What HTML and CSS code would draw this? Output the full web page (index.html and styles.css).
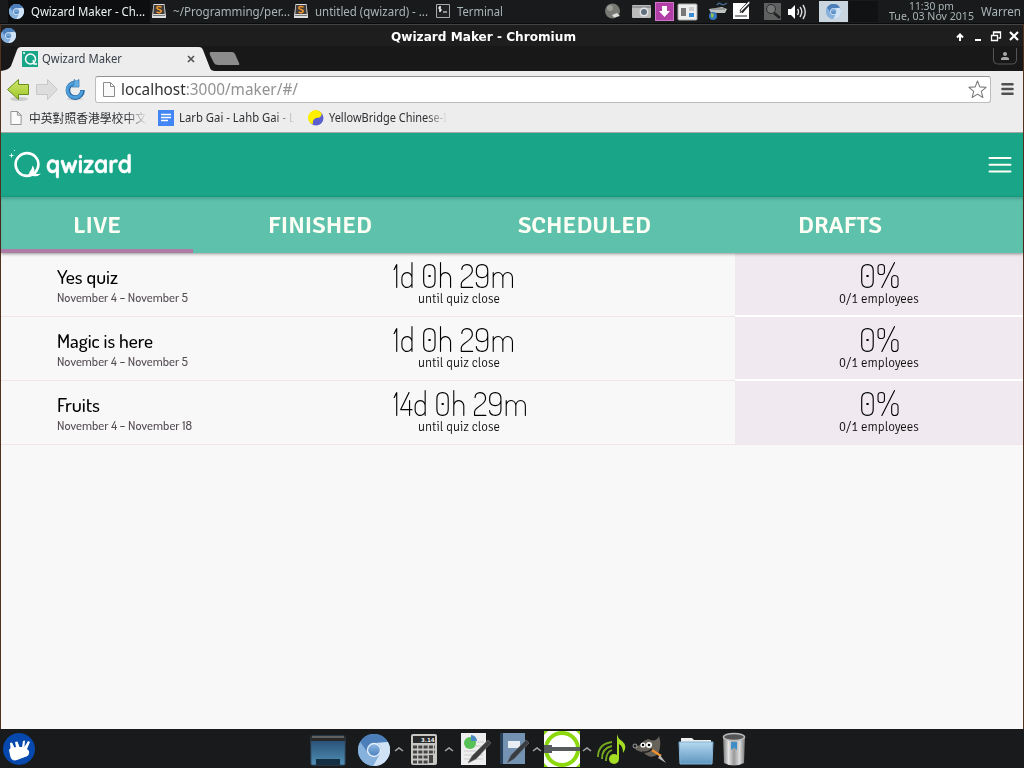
FILE: index.html
```html
<!DOCTYPE html>
<html lang="en">
<head>
<meta charset="utf-8">
<title>Qwizard Maker</title>
<link rel="stylesheet" href="styles.css">
</head>
<body>
<svg class="defs" width="0" height="0">
  <defs>
    <linearGradient id="blue" x2="0" y2="1"><stop stop-color="#8db8e2"/><stop offset="1" stop-color="#4d83c0"/></linearGradient>
    <linearGradient id="screen" x2="0" y2="1"><stop stop-color="#23466c"/><stop offset="1" stop-color="#4f8fb5"/></linearGradient>
    <linearGradient id="folder" x2="0" y2="1"><stop stop-color="#b5d8ee"/><stop offset="1" stop-color="#5d96c0"/></linearGradient>
    <linearGradient id="metal"><stop stop-color="#777"/><stop offset=".25" stop-color="#e4e4e4"/><stop offset=".5" stop-color="#999"/><stop offset=".75" stop-color="#ddd"/><stop offset="1" stop-color="#777"/></linearGradient>
    <linearGradient id="leaf" x2="0" y2="1"><stop stop-color="#d0e66a"/><stop offset="1" stop-color="#9fc62c"/></linearGradient>
    <symbol id="chromium" viewBox="0 0 32 32">
      <circle cx="16" cy="16" r="16" fill="#76a4d4"/>
      <path d="M2.1 8A16 16 0 0 1 29.9 8L16 9A7 7 0 0 0 9.3 18Z" fill="#4c7fb9"/>
      <path d="M29.9 8A16 16 0 0 1 15 32l7-12.500A7 7 0 0 0 18 9Z" fill="#cfe2f6"/>
      <path d="M2.100 8A16 16 0 0 0 15 32l5-10A7 7 0 0 1 9.300 18Z" fill="#86b1dd"/>
      <circle cx="16" cy="16" r="7.200" fill="#e4effa"/><circle cx="16" cy="16" r="5.800" fill="url(#blue)"/>
    </symbol>
    <symbol id="sublime" viewBox="0 0 14 14">
      <path d="M1.500 0h11L14 12v2H0v-2Z" fill="#ddd"/><path d="M2 1h10l.7 9H1.300Z" fill="#403d3b"/><path d="M1 11.500h12" stroke="#777"/>
      <path d="M9.500 3Q5 1.600 4.800 4q0 1 2.300 1.500T9.300 7.200Q9 9.500 4.500 8.100" fill="none" stroke="#f79a2e" stroke-width="1.500"/>
    </symbol>
    <symbol id="page" viewBox="0 0 12 15"><path d="M.5.500h7l4 4v10H.5ZM7.500.500v4h4" fill="#fafafa" stroke="#8b8b8b"/></symbol>
  </defs>
</svg>

<header class="panel">
  <div class="task task-active"><svg class="i15"><use href="#chromium"/></svg><span data-w="114">Qwizard Maker - Ch...</span></div>
  <div class="task task-code"><svg class="i14"><use href="#sublime"/></svg><span data-w="117">~/Programming/per...</span></div>
  <div class="task task-doc"><svg class="i14"><use href="#sublime"/></svg><span data-w="113">untitled (qwizard) - ...</span></div>
  <div class="task task-term"><svg class="i14" viewBox="0 0 14 14"><path d="M.5.500h13v13H.5Z" fill="#202223" stroke="#aaa"/><path d="M5 3H3v2h2v2H3M4 2v6M7 8h4" fill="none" stroke="#fff"/></svg><span data-w="46">Terminal</span></div>
  <svg class="tray" viewBox="600 0 280 24">
    <circle cx="612.500" cy="11" r="7.500" fill="#777972"/><circle cx="610" cy="8" r="3" fill="#9b9d95"/><path d="M612 15l5-2 3 3-6 1.500Z" fill="#ddd"/>
    <rect x="632" y="5" width="19" height="13" rx="1" fill="#bbb"/><path d="M632 7h19" stroke="#888" stroke-width="1.500"/><circle cx="644" cy="12" r="4.500" fill="#e6e6e6"/><circle cx="644" cy="12" r="3" fill="#607080"/>
    <rect x="655.500" y="2.500" width="18" height="18" fill="#b23fa7" stroke="#cf77ca"/><path d="M662 6h5v5h3l-5.500 6-5.500-6h3Z" fill="#fff"/>
    <rect x="678" y="4" width="19" height="16" rx="1" fill="#eee" stroke="#aaa"/><rect x="681" y="8" width="5" height="8" fill="#777"/><path d="M689 7h5v4h-5Z" fill="#ccc"/><path d="M689 13h5v4h-5Z" fill="#3b8bd0"/>
    <path d="M709 9l13-2 5 2-2 4h-14Z" fill="#bfc4c1"/><path d="M711 9h14" stroke="#6c716e"/><path d="M717 5q2-3 4-1t6-1" fill="none" stroke="#46678c" stroke-width="1.500"/><circle cx="713" cy="16" r="4" fill="#3376bb"/><path d="M711 13l3 1-1 4-2-1Z" fill="#94bd55"/>
    <path d="M733 3h16v16h-16Z" fill="#fff"/><path d="M735 16h12" stroke="#222"/><path d="M741 12l8-9" stroke="#222" stroke-width="4"/><path d="M740 13l1-4 8-8 1 2-8 8Z" fill="#eee" stroke="#222" stroke-width=".6"/>
    <path d="M764 3h17v17h-17Z" fill="#5f6060"/><circle cx="771" cy="9" r="4.500" fill="#747676" stroke="#292a2b"/><path d="M774 13l6 5" stroke="#202020" stroke-width="2.500"/>
    <path d="M788 9h3l4-4v14l-4-4h-3Z" fill="#fff"/><path d="M797.500 9q2 2.500 0 6M800 7q3.500 4.500 0 10M803 5q4.500 7 0 14" fill="none" stroke="#ddd" stroke-width="1.400"/>
    <path d="M819 1h29v21h-29Z" fill="#c9d5df"/><path d="M849 1h29v21h-29Z" fill="#111213"/><use href="#chromium" x="826" y="4" width="15" height="15"/>
  </svg>
  <div class="clock"><span data-w="45">11:30 pm</span><span data-w="85">Tue, 03 Nov 2015</span></div>
  <span class="user" data-w="40">Warren</span>
</header>

<main class="window">
  <div class="titlebar">
    <svg class="i15"><use href="#chromium"/></svg>
    <h1><span data-w="185">Qwizard Maker - Chromium</span></h1>
    <svg class="controls" viewBox="951 25 70 22"><path d="M960 41v-6M957 37.500l3-3 3 3" fill="none" stroke="#fff" stroke-width="2"/><path d="M975 40h6" stroke="#fff" stroke-width="2"/><path d="M993.500 35v-3h7v6h-2M991.500 35.500h6v5h-6ZM991 35.500h7M993 32.500h8" fill="none" stroke="#fff" stroke-width="1.300"/><path d="M1010 32l8 8M1018 32l-8 8" stroke="#fff" stroke-width="2.200"/></svg>
  </div>
  <div class="tabstrip">
    <div class="browser-tab">
      <svg class="tab-shape" viewBox="0 0 240 25"><path d="M0 25q8-1 10-5L16 4q1-3 4-3h178q3 0 4 3l7 18q1 3 5 3Z" fill="#ededed"/><path d="M210 6h21q2 0 3 2l4 9q1 2-1 2h-20q-3 0-4-2l-4-8q-1-3 1-3Z" fill="#8c8c8c"/></svg>
      <div class="tab-label">
        <svg class="i16" viewBox="0 0 16 16"><path d="M0 0h16v16H0Z" fill="#19a587"/><circle cx="8.500" cy="8" r="5" fill="none" stroke="#fff" stroke-width="1.500"/><path d="M11 9l1 4h3M1 2h2" fill="none" stroke="#fff" stroke-width="1.300"/></svg>
        <span data-w="80">Qwizard Maker</span>
        <svg class="tab-close" viewBox="0 0 8 8"><path d="M1 1l6 6M7 1L1 7" stroke="#555" stroke-width="1.700"/></svg>
      </div>
    </div>
    <svg class="profile" viewBox="0 0 26 19"><path d="M1.500 1v12q0 4 4 4h15q4 0 4-4V1" fill="none" stroke="#555"/><circle cx="13" cy="7" r="2" fill="#aaa"/><path d="M9 13v-1q0-2 3-2h2q3 0 3 2v1Z" fill="#aaa"/></svg>
  </div>
  <div class="toolbar">
    <svg class="nav" viewBox="0 71 95 36">
      <ellipse cx="19" cy="99" rx="9" ry="2" fill="#ccc"/><path d="M7.500 89.500l11-10v5h10v10h-10v5Z" fill="url(#leaf)" stroke="#66901b"/>
      <path d="M57.500 89.500l-10-10v5h-11v10h11v5Z" fill="#ddd" stroke="#c8c8c8"/>
      <ellipse cx="75" cy="99" rx="8" ry="1.500" fill="#d4d4d4"/>
      <path d="M82.500 90A7.300 7.300 0 1 1 75 83" fill="none" stroke="#24649f" stroke-width="4.600"/><path d="M82 90.500A7.300 7.300 0 1 1 75 83" fill="none" stroke="#4c9edb" stroke-width="3"/><path d="M74 79.500l2.500 1.500 2.500-1.500v7.500h-7.500l2.500-2.500Z" fill="#64b0e5" stroke="#3375ae" stroke-width=".7"/>
    </svg>
    <div class="address">
      <svg class="url-page"><use href="#page"/></svg>
      <div class="url"><span data-w="177"><b>localhost</b>:3000/maker/#/</span></div>
      <svg class="star" viewBox="0 0 18 18"><path d="M9 1l2.200 5.500 5.900.4-4.500 3.900 1.500 5.800L9 13.400l-5.100 3.200 1.500-5.800L.9 6.900l5.900-.4Z" fill="#fff" stroke="#777" stroke-linejoin="round"/></svg>
    </div>
    <svg class="menu" viewBox="0 0 14 14"><path d="M2 2.200h10M2 7h10M2 11.800h10" stroke="#505050" stroke-width="2.600" stroke-linecap="round"/></svg>
  </div>
  <div class="bookmarks">
    <div class="bookmark bm-one"><svg><use href="#page"/></svg><span class="fade" data-w="118">中英對照香港學校中文</span></div>
    <div class="bookmark bm-two"><svg viewBox="0 0 16 16"><path d="M0 0h16v16H0Z" fill="#4285f4"/><path d="M3 4.500h10M3 7.500h10M3 10.500h7" stroke="#fff" stroke-width="1.300"/></svg><span class="fade" data-w="116">Larb Gai - Lahb Gai - L</span></div>
    <div class="bookmark bm-three"><svg viewBox="0 0 16 16"><circle cx="8" cy="8" r="7.500" fill="#5c60ce"/><path d="M1.500 12A7.500 7.500 0 0 1 11 1q4 2 2 5c-2 3-5 .5-7.500 4Q4.500 12 5 14Q2.500 14 1.500 12Z" fill="#ffef00"/></svg><span class="fade" data-w="118">YellowBridge Chinese-I</span></div>
  </div>

  <div class="app">
    <div class="app-header">
      <div class="brand">
        <svg viewBox="8 149 36 34"><circle cx="27" cy="165.500" r="11.400" fill="none" stroke="#fff" stroke-width="2.600"/><path d="M29.500 173q2.500-2 3-6.500 3 4 1.500 7.500 3 1.500 7 .5-3 3.500-8 2.500t-7.500.500q4-2 4-4.500Z" fill="#fff"/><path d="M11.500 154.500v4M9.500 156.500h4M14 151.500h1" stroke="#e5fff5"/></svg>
        <span data-w="86">qwizard</span>
      </div>
      <svg class="burger" viewBox="0 0 24 20"><path d="M1.500 3h21M1.500 9.800h21M1.500 16.600h21" stroke="#fdfff5" stroke-width="2" stroke-linecap="round"/></svg>
    </div>
    <nav class="tabs">
      <a class="tab tab-live"><span data-w="48">LIVE</span></a>
      <a class="tab tab-finished"><span data-w="104">FINISHED</span></a>
      <a class="tab tab-scheduled"><span data-w="133">SCHEDULED</span></a>
      <a class="tab tab-drafts"><span data-w="84">DRAFTS</span></a>
    </nav>
    <section class="quiz">
      <div class="about"><h2><span data-w="61">Yes quiz</span></h2><p><span data-w="131">November 4 – November 5</span></p></div>
      <div class="time"><strong><span data-w="122">1d <i>0</i>h 29m</span></strong><small><span data-w="82">until quiz close</span></small></div>
      <div class="progress"><strong><span data-w="41"><i>0</i>%</span></strong><small><span data-w="80">0/1 employees</span></small></div>
    </section>
    <section class="quiz">
      <div class="about"><h2><span data-w="96">Magic is here</span></h2><p><span data-w="131">November 4 – November 5</span></p></div>
      <div class="time"><strong><span data-w="122">1d <i>0</i>h 29m</span></strong><small><span data-w="82">until quiz close</span></small></div>
      <div class="progress"><strong><span data-w="41"><i>0</i>%</span></strong><small><span data-w="80">0/1 employees</span></small></div>
    </section>
    <section class="quiz">
      <div class="about"><h2><span data-w="43">Fruits</span></h2><p><span data-w="135">November 4 – November 18</span></p></div>
      <div class="time"><strong><span data-w="135">14d <i>0</i>h 29m</span></strong><small><span data-w="82">until quiz close</span></small></div>
      <div class="progress"><strong><span data-w="41"><i>0</i>%</span></strong><small><span data-w="80">0/1 employees</span></small></div>
    </section>
  </div>
</main>

<footer class="dock">
  <svg class="start" viewBox="0 729 60 39"><circle cx="19" cy="749" r="16" fill="#0648ad"/><path d="M9 750l1.500-2-.5-5 2-.5 2.500 5 1.500-.5-1-5 2.500-.5 2 5.500h2.500l1-6 2-.5-.5 6.500 3.500-6 2 1-3 7 2 2q1 5-4 6l-8 3q-6 2-7-5Z" fill="#fff"/></svg>
  <svg class="launch-desk" viewBox="305 729 48 39"><rect x="311" y="736" width="34" height="29" rx="1" fill="url(#screen)" stroke="#34506c"/><path d="M311 736h34v5h-34Z" fill="#292929"/><path d="M312 737h32" stroke="#999"/><path d="M316 759h24v6h-24Z" fill="#152e42"/></svg>
  <svg class="launch-web" viewBox="353 729 53 39"><use href="#chromium" x="358" y="734" width="32" height="32"/><path d="M395 751l4-3 4 3" fill="none" stroke="#aaa" stroke-width="1.500"/></svg>
  <svg class="launch-calc" viewBox="406 729 50 39"><rect x="411" y="734" width="26" height="31" rx="2" fill="#c9c7c3"/><path d="M413 736h22v7h-22Z" fill="#292a2b"/><text class="digits" x="421" y="742">3.14</text><g stroke="#444" stroke-width="3"><path stroke-dasharray="4 1.300" d="M413 747h22M413 752h22M413 757h16M413 762h16"/><path d="M431 755v8" stroke-width="4"/></g><path d="M445 751l4-3 4 3" fill="none" stroke="#aaa" stroke-width="1.500"/></svg>
  <svg class="launch-sheet" viewBox="456 729 38 39"><path d="M461 733h25v32h-25Z" fill="#eee"/><path d="M474 742h10M474 746h10M464 751h19M464 755h19M464 759h19" stroke="#ccc"/><circle cx="470" cy="743" r="6" fill="#56c256"/><path d="M471 741v-6a6 6 0 0 1 6 6Z" fill="#4b8bc3"/><path d="M468 763l4-7 16-16 3 3-15 16Z" fill="#403f40" stroke="#777" stroke-width=".6"/></svg>
  <svg class="launch-note" viewBox="494 729 50 39"><path d="M500 733h25v31h-25Z" fill="#7492b2"/><path d="M500 733h3v31h-3Z" fill="#263e55"/><path d="M508 741h12v7h-12Z" fill="#e7edf2"/><path d="M507 763l4-8 15-15 3 3-15 16Z" fill="#383d43" stroke="#777" stroke-width=".6"/><path d="M533 751l4-3 4 3" fill="none" stroke="#aaa" stroke-width="1.500"/></svg>
  <svg class="launch-ring" viewBox="544 729 50 39"><path d="M544 731h36v36h-36Z" fill="#fff"/><circle cx="562" cy="749" r="16" fill="none" stroke="#8bd90c" stroke-width="4"/><path d="M544 735v-4h4M576 731h4v4M544 763v4h4M576 767h4v-4" fill="#8bd90c"/><path d="M544 745h8v2h28v4h-28v2h-8Z" fill="#575b5b"/><path d="M583 751l4-3 4 3" fill="none" stroke="#aaa" stroke-width="1.500"/></svg>
  <svg class="launch-music" viewBox="594 729 36 39"><g fill="none" stroke="#75aa20" stroke-width="1.800"><path d="M598 757q0-13 14-15M602 759q0-11 10-13M606 761q0-9 6-11"/></g><ellipse cx="614" cy="759" rx="5" ry="5" fill="#a5dd24"/><path d="M617 759v-25q1 5 5 7 6 5 1 12 0-7-4-9v15Z" fill="#a5dd24"/></svg>
  <svg class="launch-gimp" viewBox="630 729 45 39"><path d="M640 745l4-4 4-2q8 4 11-3 3 9-1 18-7 6-14-1l-8-3-1-3Z" fill="#67635a"/><circle cx="643" cy="745" r="2.600" fill="#fff"/><circle cx="649" cy="745" r="3" fill="#fff"/><circle cx="643" cy="745" r="1.200"/><circle cx="649" cy="745" r="1.300"/><circle cx="635" cy="746" r="2" fill="#222" stroke="#eee" stroke-width=".6"/><path d="M642 752q6 1 10-3" fill="none" stroke="#222" stroke-width="1.500"/><path d="M652 750l9 6" stroke="#ed902d" stroke-width="2.500"/><path d="M660 755l6 8-8-5Z" fill="#bbb"/></svg>
  <svg class="launch-files" viewBox="675 729 42 39"><path d="M681 738h11l2 2h17v5h-30Z" fill="#eee"/><path d="M679 742h34l-1 22h-32Z" fill="url(#folder)" stroke="#83b4d5"/></svg>
  <svg class="launch-trash" viewBox="717 729 35 39"><path d="M723 737l1 26q10 5 20 0l1-26Z" fill="url(#metal)"/><ellipse cx="734" cy="737" rx="10.500" ry="3.500" fill="#555" stroke="#bbb" stroke-width="1.500"/><path d="M731 742h6v8l-3-2.500-3 2.500Z" fill="#3d8ec6"/></svg>
</footer>
<script src="fit.js"></script>
</body>
</html>
```
FILE: styles.css
```css
* { box-sizing: border-box; }
body { margin: 0; width: 1024px; height: 768px; overflow: hidden; display: flex; flex-direction: column; background: #17191a; font-family: "Noto Sans", "Noto Sans CJK TC", sans-serif; }
h1, h2, p { margin: 0; font-weight: 400; }
svg { display: block; flex: none; }
.defs { position: absolute; }
[data-w] { display: inline-block; white-space: nowrap; transform-origin: left center; flex: none; }
.i14 { width: 14px; height: 14px; }
.i15 { width: 15px; height: 15px; }
.i16 { width: 16px; height: 16px; }

.panel { display: flex; height: 24px; flex: none; background: #181a1b; color: #a9b5b6; font-size: 12px; border-bottom: 1px solid #090a0a; }
.task { display: flex; align-items: center; height: 23px; line-height: 22px; }
.task svg { margin-bottom: 2px; }
.task-active { margin-left: 8px; width: 142px; padding-left: 1px; gap: 7px; background: #0d0e0f; color: #eef3f4; }
.task-active svg { margin-bottom: 0; }
.task-code { width: 144px; padding-left: 2px; gap: 7px; }
.task-doc { width: 142px; gap: 7px; }
.task-term { width: 164px; gap: 7px; }
.tray { width: 280px; height: 24px; }
.clock { width: 97px; padding: 1px 0 0 6px; display: flex; flex-direction: column; align-items: center; font-size: 11px; line-height: 10px; }
.user { line-height: 23px; margin-left: 4px; }

.window { height: 705px; flex: none; border-left: 1px solid #54301e; border-right: 1px solid #54301e; background: #f8f8f8; }
.titlebar { display: flex; align-items: center; height: 22px; background: #1e1e1e; border-top: 1px solid #444; }
.titlebar h1 { width: 935px; height: 22px; text-align: center; color: #fff; font: bold 12px/25px "DejaVu Sans", sans-serif; }
.controls { width: 70px; height: 22px; }
.tabstrip { display: flex; justify-content: space-between; height: 25px; background: #181818; }
.browser-tab { display: grid; width: 240px; }
.tab-shape, .tab-label { grid-area: 1 / 1; }
.tab-shape { width: 240px; height: 25px; }
.tab-label { display: flex; align-items: center; padding-left: 21px; gap: 4px; color: #39404b; font-size: 12px; z-index: 1; }
.tab-close { width: 8px; height: 8px; margin-left: 61px; }
.profile { width: 26px; height: 19px; margin: 1px 5px 0 0; }
.toolbar { display: flex; align-items: center; height: 36px; background: #ededed; }
.nav { width: 95px; height: 36px; margin-left: -1px; }
.address { display: flex; align-items: center; width: 896px; height: 27px; margin-top: 1px; background: #fff; border: 1px solid #bdbdbd; border-top-color: #929292; border-radius: 3px; }
.url-page { width: 12px; height: 15px; margin-left: 7px; }
.url { flex: 1; padding: 0 0 0 6px; color: #929292; font-size: 16px; line-height: 23px; }
.url b { color: #333; font-weight: 400; }
.star { width: 19px; height: 19px; margin-right: 3px; }
.menu { width: 15px; height: 14px; margin-left: 9px; }
.bookmarks { display: flex; height: 26px; background: #ededed; border-bottom: 1px solid #a8a8a8; padding-bottom: 4px; }
.bookmark { display: flex; align-items: center; color: #2e3033; font-size: 12px; }
.bookmark svg { width: 16px; height: 16px; }
.bm-one { width: 157px; padding-left: 7px; gap: 5px; }
.bm-one svg { height: 14px; }
.bm-two { width: 150px; gap: 5px; }
.bm-three { gap: 5px; }
.fade { mask-image: linear-gradient(to right, #000 82%, transparent); }

.app-header { display: flex; justify-content: space-between; align-items: center; height: 64px; background: #18a588; }
.brand { display: flex; align-items: center; padding-left: 7px; gap: 2px; color: #fff; font: 700 25px/30px Quicksand, Dosis, Lato, sans-serif; }
.brand span { margin-top: -2px; -webkit-text-stroke: .4px #fff; }
.brand svg { width: 36px; height: 34px; }
.burger { width: 24px; height: 20px; margin-right: 11px; }
.tabs { display: flex; position: relative; height: 56px; background: #5ec1ac; box-shadow: inset 0 3px 3px -1px #37877a80, 0 1px 3px #0006; z-index: 2; }
.tab { display: flex; align-items: center; justify-content: center; padding: 2px 1px 0 0; color: #fdfff5; font: 600 23.5px/30px Signika, "Noto Sans", sans-serif; }
.tab-live { width: 192px; border-bottom: 4px solid #ac7ca5; padding: 6px 0 0; }
.tab-finished { width: 254px; }
.tab-scheduled { width: 276px; }
.tab-drafts { width: 234px; }
.quiz { display: flex; height: 64px; border-bottom: 1px solid #f1e7ea; }
.about { width: 392px; padding: 13px 0 0 56px; }
.about h2 { height: 23px; color: #000; font: 500 19px/22px Dosis, Roboto, sans-serif; }
.about p { height: 17px; color: #554d54; font: 500 12px/17px Dosis, Roboto, sans-serif; }
.time { width: 342px; padding-top: 4px; }
.time strong, .progress strong { display: block; height: 34px; color: #000; font: 200 34px/35px Dosis, Roboto, sans-serif; }
strong i { font-style: normal; background: linear-gradient(#222, #222) center 54% / 2px 2px no-repeat; }
.time small, .progress small { display: block; height: 15px; color: #111; font: 300 13.5px/15px Signika, "Noto Sans", sans-serif; }
.time small { padding-left: 25px; }
.progress { width: 288px; height: 64px; padding-top: 4px; text-align: center; background: #f0e9ef; border-bottom: 2px solid #fff; }
.quiz:last-child .progress { border-bottom: 1px solid #f1e7ea; }

.dock { display: flex; height: 39px; flex: none; background: #181a1b; }
.dock svg { height: 39px; }
.start { width: 60px; margin-right: 245px; }
.launch-desk { width: 48px; }
.launch-web { width: 53px; }
.launch-calc, .launch-note, .launch-ring { width: 50px; }
.launch-sheet { width: 38px; }
.launch-music { width: 36px; }
.launch-gimp { width: 45px; }
.launch-files { width: 42px; }
.launch-trash { width: 35px; }
.digits { fill: #eee; font: bold 5.5px "DejaVu Sans", sans-serif; }
```
FILE: fit.js
```js
// Condense each label to the column width given in data-w.
document.querySelectorAll('[data-w]').forEach(function (label) {
  var wanted = Number(label.dataset.w);
  var natural = label.getBoundingClientRect().width;
  label.style.transform = 'scaleX(' + wanted / natural + ')';
  label.style.marginRight = (wanted - natural) + 'px';
});
```
